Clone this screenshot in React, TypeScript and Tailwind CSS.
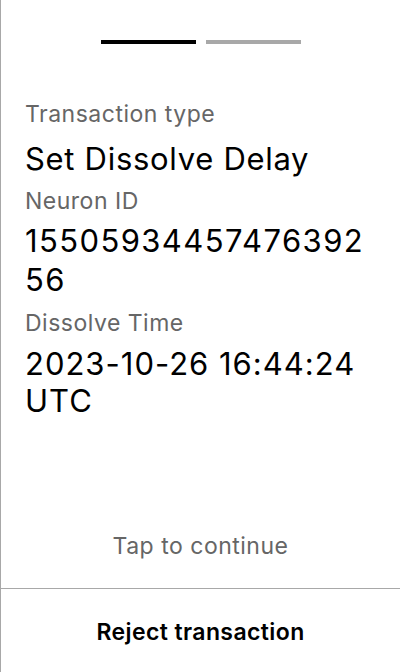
export default function App() {
  return (
    <div
      className="flex h-[672px] w-[400px] flex-col border-l border-[#a8a8a8] bg-white text-black"
      style={{ fontFamily: 'Inter, "Noto Sans", sans-serif' }}
    >
      {/* Step indicator */}
      <div className="flex justify-center gap-[10px] pt-[40px]">
        <div className="h-[4px] w-[95px] bg-black" />
        <div className="h-[4px] w-[95px] bg-[#a8a8a8]" />
      </div>

      {/* Details */}
      <div className="mt-[56px] px-[24px]">
        <div className="text-[23px] leading-[28px] tracking-[0.5px] text-[#666]">Transaction type</div>
        <div className="mt-[12px] text-[31px] leading-[38px] tracking-[0.7px]">Set Dissolve Delay</div>

        <div className="mt-[9px]">
          <div className="text-[23px] leading-[28px] tracking-[0.5px] text-[#666]">Neuron ID</div>
          <div className="mt-[6px] break-all text-[31px] leading-[39px] tracking-[1.4px]">
            1550593445747639256
          </div>
        </div>

        <div className="mt-[10px]">
          <div className="text-[23px] leading-[28px] tracking-[0.5px] text-[#666]">Dissolve Time</div>
          <div className="mt-[8px] text-[31px] leading-[37px] tracking-[1px]">
            2023-10-26 16:44:24 UTC
          </div>
        </div>
      </div>

      <div className="flex-1" />

      <div className="pb-[28px] text-center text-[23px] leading-[28px] tracking-[0.5px] text-[#666]">
        Tap to continue
      </div>

      <div className="flex h-[84px] items-center justify-center border-t border-[#a8a8a8] pt-[3px]">
        <span className="text-[23px] font-semibold tracking-[0.4px]">Reject transaction</span>
      </div>
    </div>
  );
}
